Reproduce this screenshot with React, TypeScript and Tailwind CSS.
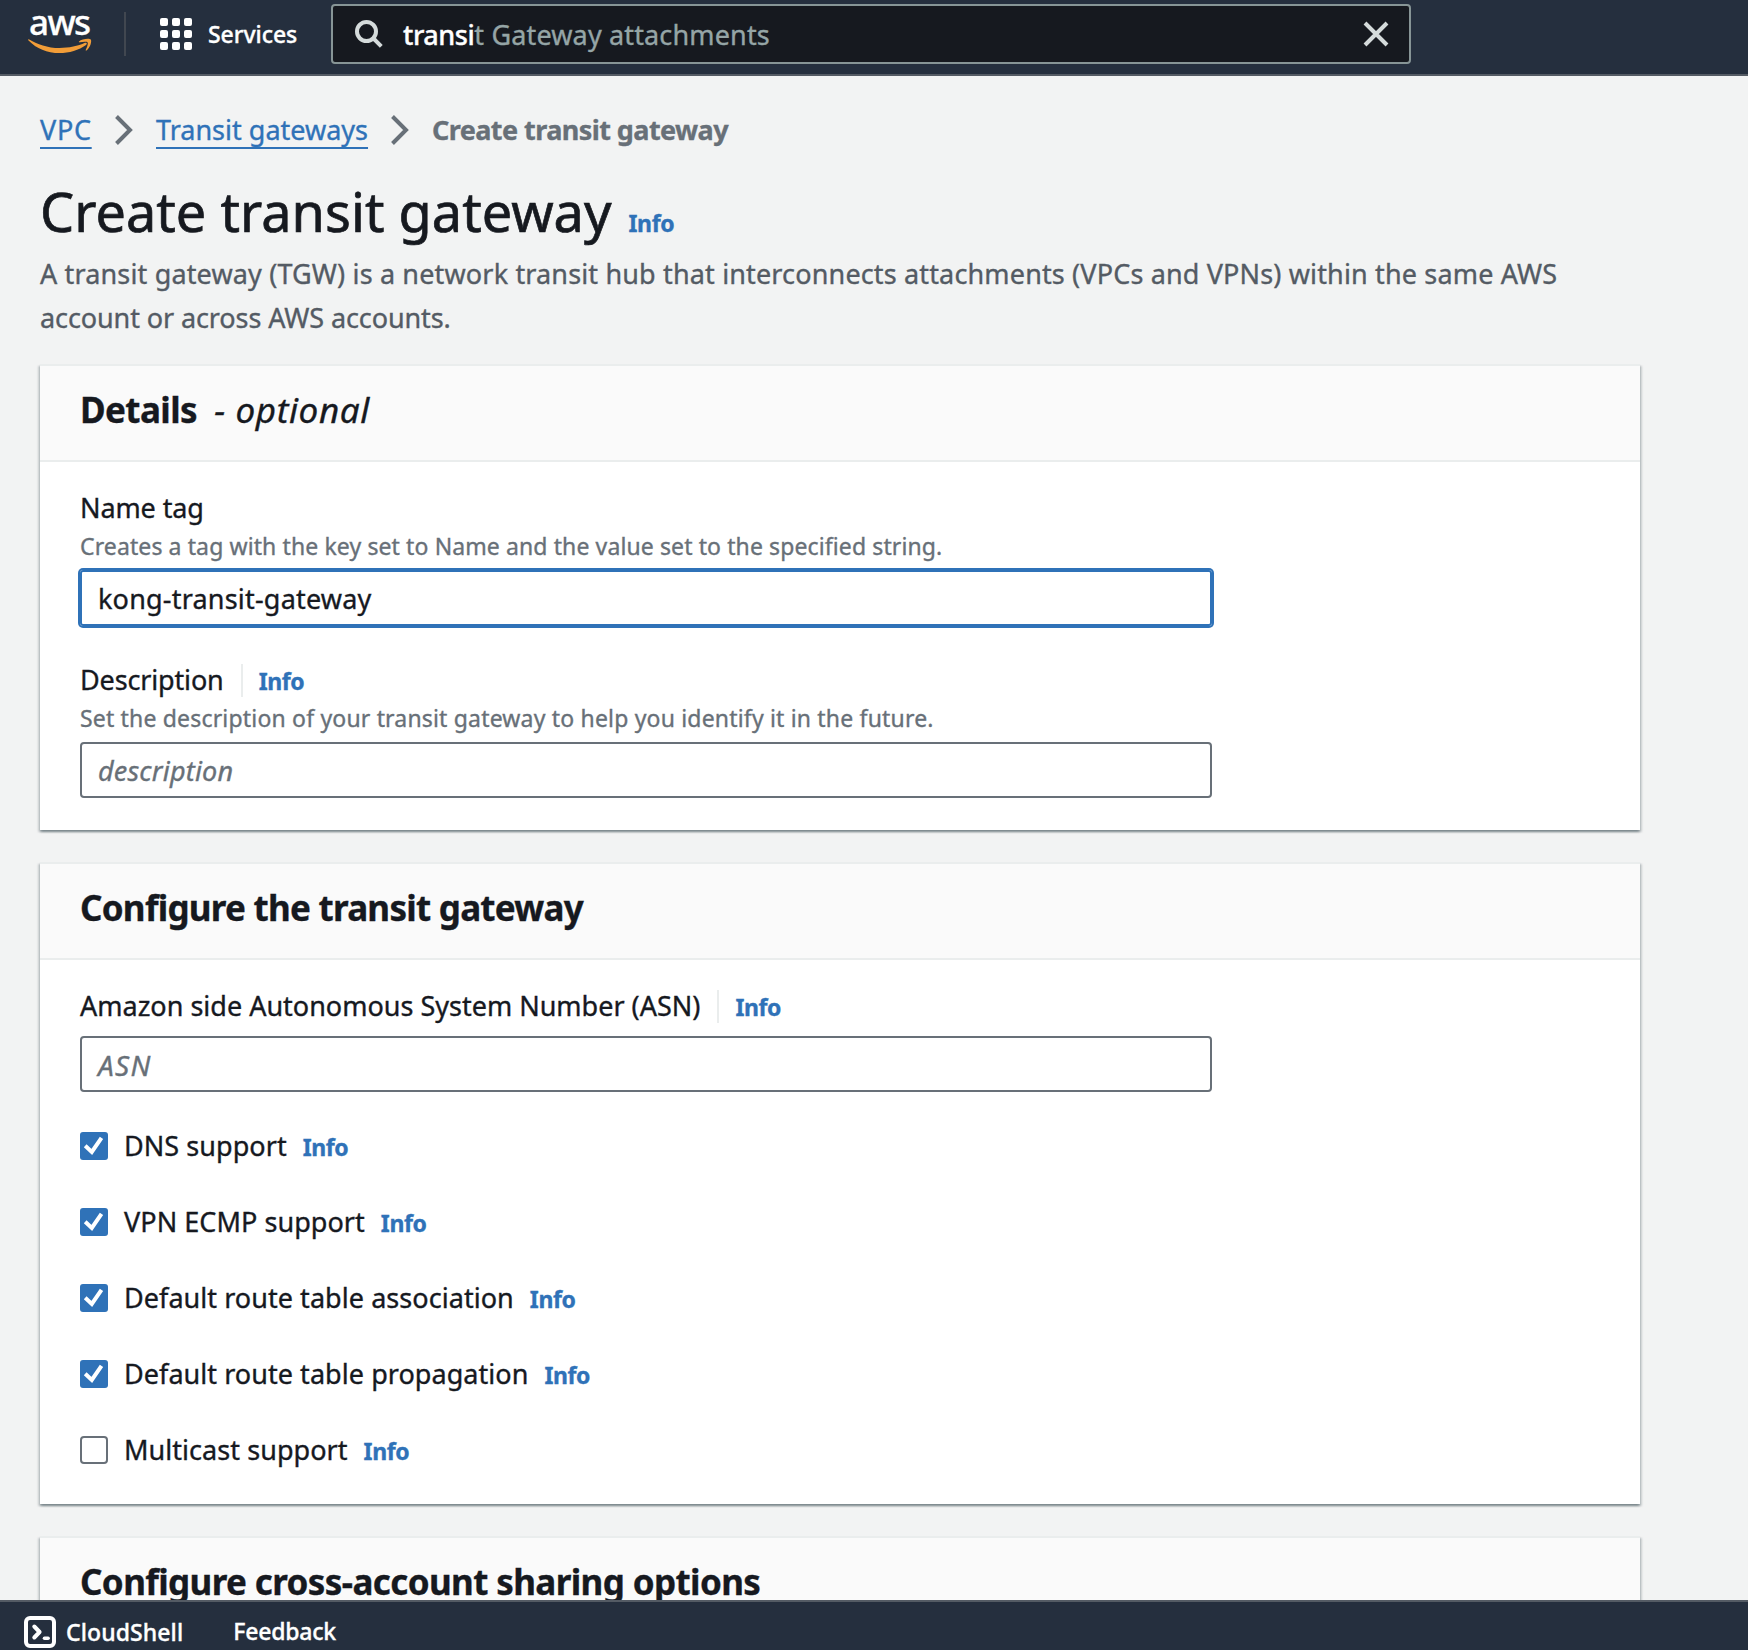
import type { ReactNode } from "react";

const options = [
  { label: "DNS support", checked: true },
  { label: "VPN ECMP support", checked: true },
  { label: "Default route table association", checked: true },
  { label: "Default route table propagation", checked: true },
  { label: "Multicast support", checked: false },
];

function Info({ className = "" }: { className?: string }) {
  return (
    <a className={`text-[23px] font-bold tracking-[-0.4px] text-[#2f72b8] ${className}`}>Info</a>
  );
}

function Card({ title, children }: { title: ReactNode; children?: ReactNode }) {
  return (
    <section className="w-[1600px] shrink-0 border-t-2 border-[#eaeded] bg-white shadow-[0_2px_2px_0_rgba(0,28,36,0.3),2px_2px_2px_0_rgba(0,28,36,0.15),-2px_2px_2px_0_rgba(0,28,36,0.15)]">
      <div className="flex h-24 items-center border-b-2 border-[#eaeded] bg-[#fafafa] px-10 pb-[7px]">
        <h2 className="text-[35px] leading-[44px] font-bold tracking-[-0.74px]">{title}</h2>
      </div>
      {children}
    </section>
  );
}

function Label({ text, info, className = "" }: { text: string; info?: boolean; className?: string }) {
  return (
    <div className={`flex h-10 items-baseline leading-10 ${className}`}>
      <span className="whitespace-nowrap">{text}</span>
      {info && (
        <>
          <span className="ml-[17px] h-[33px] w-[2px] self-center bg-[#eaeded]" />
          <Info className="ml-4" />
        </>
      )}
    </div>
  );
}

function Hint({ text, className = "" }: { text: string; className?: string }) {
  return <p className={`text-[23px] leading-[34px] text-[#687078] ${className}`}>{text}</p>;
}

function Chevron({ className = "" }: { className?: string }) {
  return (
    <svg className={`h-8 w-[19px] ${className}`} viewBox="0 0 19 32" fill="none" stroke="#687078" strokeWidth="4">
      <path d="M1.5 2.5 15 16 1.5 29.5" />
    </svg>
  );
}

function Checkbox({ checked }: { checked: boolean }) {
  return checked ? (
    <svg className="size-7" viewBox="0 0 28 28">
      <rect width="28" height="28" rx="3" fill="#2f72b8" />
      <path d="M5.200 13.800 11.800 20 21.500 5.800" fill="none" stroke="#fff" strokeWidth="4" />
    </svg>
  ) : (
    <span className="size-7 rounded-[4px] border-2 border-[#687078] bg-white" />
  );
}

export default function App() {
  return (
    <div className="flex h-[1650px] w-[1748px] flex-col overflow-hidden bg-[#f2f3f3] font-['Noto_Sans',sans-serif] text-[27px] text-[#16191f] [-webkit-text-stroke-width:0.35px]">
      <header className="flex h-[76px] shrink-0 items-start border-b-2 border-[#545b64] bg-[#252f3e] text-white">
        <div className="relative ml-7 h-[60px] w-16">
          <span className="absolute top-0 left-[1px] text-[35px] leading-[44px] font-medium tracking-[-1.6px]">aws</span>
          <svg className="absolute top-[38px] left-0 h-4 w-16" viewBox="0 0 64 16" fill="#f29d38">
            <path d="M.8 1.2C9 6.2 20 10 31.500 10C41 10 50 8 57 4.800C58.500 4.200 59.600 5.800 58 6.900C51 12 41 15 31.500 15C19 15 8.500 10.500.5 2.400C-.2 1.700.2.900.8 1.200Z" />
            <path d="M51 3.600C53.500 1 61.500 0 62.800 1.600C64 3.500 62.200 9.800 58.600 12.400C57.900 12.900 57.400 12.500 57.800 11.700C59 9.300 60.400 5.300 59.600 4.400C58.800 3.400 54.500 3.900 51.700 4.300C50.900 4.400 50.600 4 51 3.600Z" />
          </svg>
        </div>
        <span className="mt-3 ml-8 h-11 w-[2px] bg-[#414750]" />
        <div className="mt-[18px] ml-[34px] grid grid-cols-3 gap-1">
          {Array.from({ length: 9 }, (_, i) => (
            <span key={i} className="size-2 rounded-[2px] bg-white" />
          ))}
        </div>
        <span className="mt-[14px] ml-4 w-[123px] text-[23px] leading-10 font-medium tracking-[-0.05px]">Services</span>
        <div className="mt-1 flex h-[60px] w-[1080px] items-center rounded-[4px] border-2 border-[#879596] bg-[#16191f] pr-5 pl-[22px]">
          <svg className="size-7" viewBox="0 0 28 28" fill="none" stroke="#d5dbdb" strokeWidth="4">
            <circle cx="11.500" cy="11.500" r="9.500" />
            <path d="m18 18 8.300 8.300" />
          </svg>
          <span className="ml-5 flex-1 pt-[2px] text-[#95a5a6]">
            <span className="font-medium tracking-[-0.45px] text-white">transi</span>
            <span className="tracking-[0.15px]">t Gateway attachments</span>
          </span>
          <svg className="size-[26px]" viewBox="0 0 26 26" stroke="#d5dbdb" strokeWidth="4">
            <path d="m2 2 22 22M24 2 2 24" />
          </svg>
        </div>
      </header>

      <main className="flex min-h-0 flex-1 flex-col overflow-hidden pl-10">
        <nav className="mt-8 flex h-11 shrink-0 items-center leading-[44px] whitespace-nowrap">
          <a className="w-[52px] tracking-[0.7px] text-[#2f72b8] underline decoration-2 underline-offset-[7px] [text-decoration-skip-ink:none]">VPC</a>
          <Chevron className="ml-[23px]" />
          <a className="ml-[22px] w-[212px] text-[#2f72b8] underline decoration-2 underline-offset-[7px] [text-decoration-skip-ink:none]">Transit gateways</a>
          <Chevron className="ml-[23px]" />
          <span className="ml-[22px] font-bold tracking-[-0.57px] text-[#687078]">Create transit gateway</span>
        </nav>

        <div className="mt-[29px] flex h-[60px] shrink-0 items-baseline leading-[60px]">
          <h1 className="text-[54px] tracking-[0.05px] [-webkit-text-stroke-width:0.7px]">Create transit gateway</h1>
          <Info className="ml-[17px]" />
        </div>
        <p className="mt-[11px] shrink-0 leading-[44px] whitespace-nowrap text-[#545b64]">
          <span className="tracking-[0.15px]">
            A transit gateway (TGW) is a network transit hub that interconnects attachments (VPCs and VPNs) within the same AWS
          </span>
          <br />
          <span className="tracking-[-0.1px]">account or across AWS accounts.</span>
        </p>

        <div className="mt-6 flex flex-col gap-8">
          <Card
            title={
              <>
                <span className="tracking-[-0.6px]">Details</span>{" "}
                <span className="ml-[9px] font-normal tracking-[0.6px] italic">- optional</span>
              </>
            }
          >
            <div className="px-10 pt-[26px] pb-8">
              <Label text="Name tag" className="tracking-[-0.1px]" />
              <Hint
                className="mt-px tracking-[0.11px]"
                text="Creates a tag with the key set to Name and the value set to the specified string."
              />
              <div className="mt-[7px] flex h-14 w-[1132px] items-center rounded-[3px] border-2 border-[#2f72b8] px-4 pt-[2px] tracking-[0.2px] ring-2 ring-[#2f72b8]">
                kong-transit-gateway
              </div>
              <Label info text="Description" className="mt-[34px] tracking-[-0.15px]" />
              <Hint
                className="mt-px tracking-[0.18px]"
                text="Set the description of your transit gateway to help you identify it in the future."
              />
              <div className="mt-[7px] flex h-14 w-[1132px] items-center rounded-[4px] border-2 border-[#687078] px-4 pt-[2px] tracking-[0.2px] text-[#687078] italic">
                description
              </div>
            </div>
          </Card>

          <Card title="Configure the transit gateway">
            <div className="px-10 pt-[26px] pb-10">
              <Label info text="Amazon side Autonomous System Number (ASN)" />
              <div className="mt-[10px] flex h-14 w-[1132px] items-center rounded-[4px] border-2 border-[#687078] px-4 pt-[2px] text-[28px] tracking-[1.3px] text-[#687078] italic">
                ASN
              </div>
              <div className="mt-10 flex flex-col gap-12">
                {options.map((o) => (
                  <div key={o.label} className="flex h-7 items-center">
                    <Checkbox checked={o.checked} />
                    <div className="ml-4 flex items-baseline">
                      <span className="tracking-[0.05px]">{o.label}</span>
                      <Info className="ml-4" />
                    </div>
                  </div>
                ))}
              </div>
            </div>
          </Card>

          <Card title={<span className="tracking-[-0.61px]">Configure cross-account sharing options</span>} />
        </div>
      </main>

      <footer className="flex h-[50px] shrink-0 items-start border-t-2 border-[#545b64] bg-[#252f3e] pl-6 text-[23px] leading-10 font-medium text-white">
        <svg className="mt-[14px] size-8" viewBox="0 0 32 32" fill="none" stroke="#fff">
          <rect x="2" y="2" width="28" height="28" rx="4" strokeWidth="4" />
          <path d="m10.300 10.500 5.300 5.500-5.300 5.500" strokeWidth="4" strokeLinecap="round" strokeLinejoin="round" />
          <path d="M20.500 22.300h3.600" strokeWidth="3.600" strokeLinecap="round" />
        </svg>
        <span className="mt-[10px] ml-[10px] tracking-[0.1px]">CloudShell</span>
        <span className="mt-[9px] ml-[50px] tracking-[-0.2px]">Feedback</span>
      </footer>
    </div>
  );
}
